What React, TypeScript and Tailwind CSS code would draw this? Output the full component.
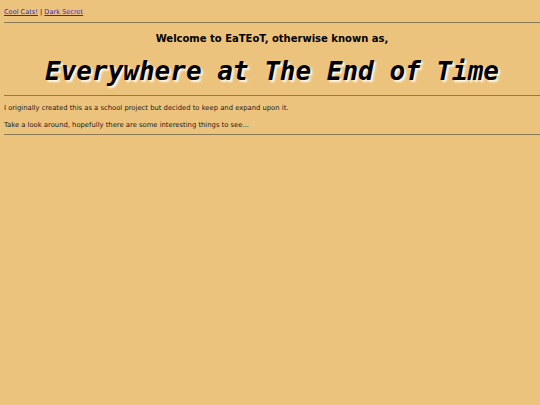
import React from 'react';

const App: React.FC = () => {
  return (
    <div
      className="min-h-[405px] bg-[#ecc37d] pl-[4px] pt-[8px] text-black"
      style={{ fontFamily: '"DejaVu Sans", Verdana, sans-serif' }}
    >
      <nav className="text-[6.6px] leading-[8px]">
        <a href="#" className="text-[#3b1fc2] underline">Cool Cats!</a>
        <span> | </span>
        <a href="#" className="text-[#3b1fc2] underline">Dark Secret</a>
      </nav>
      <hr className="mt-[6px] border-t border-[#8a7a55]" />

      <h2 className="mt-[10px] text-center text-[10px] font-bold leading-[12px]">
        Welcome to EaTEoT, otherwise known as,
      </h2>
      <h1
        className="mt-[10px] text-center text-[26px] font-bold italic leading-[32px] [text-shadow:2px_2px_2px_#fff8e8]"
        style={{ fontFamily: '"DejaVu Sans Mono", monospace' }}
      >
        Everywhere at The End of Time
      </h1>
      <hr className="mt-[8px] border-t border-[#8a7a55]" />

      <p className="mt-[8px] text-[6.8px] leading-[8px] text-[#1a1a1a]">
        I originally created this as a school project but decided to keep and expand upon it.
      </p>
      <p className="mt-[9px] text-[6.8px] leading-[8px] text-[#1a1a1a]">
        Take a look around, hopefully there are some interesting things to see...
      </p>
      <hr className="mt-[5px] border-t border-[#8a7a55]" />
    </div>
  );
};

export default App;
